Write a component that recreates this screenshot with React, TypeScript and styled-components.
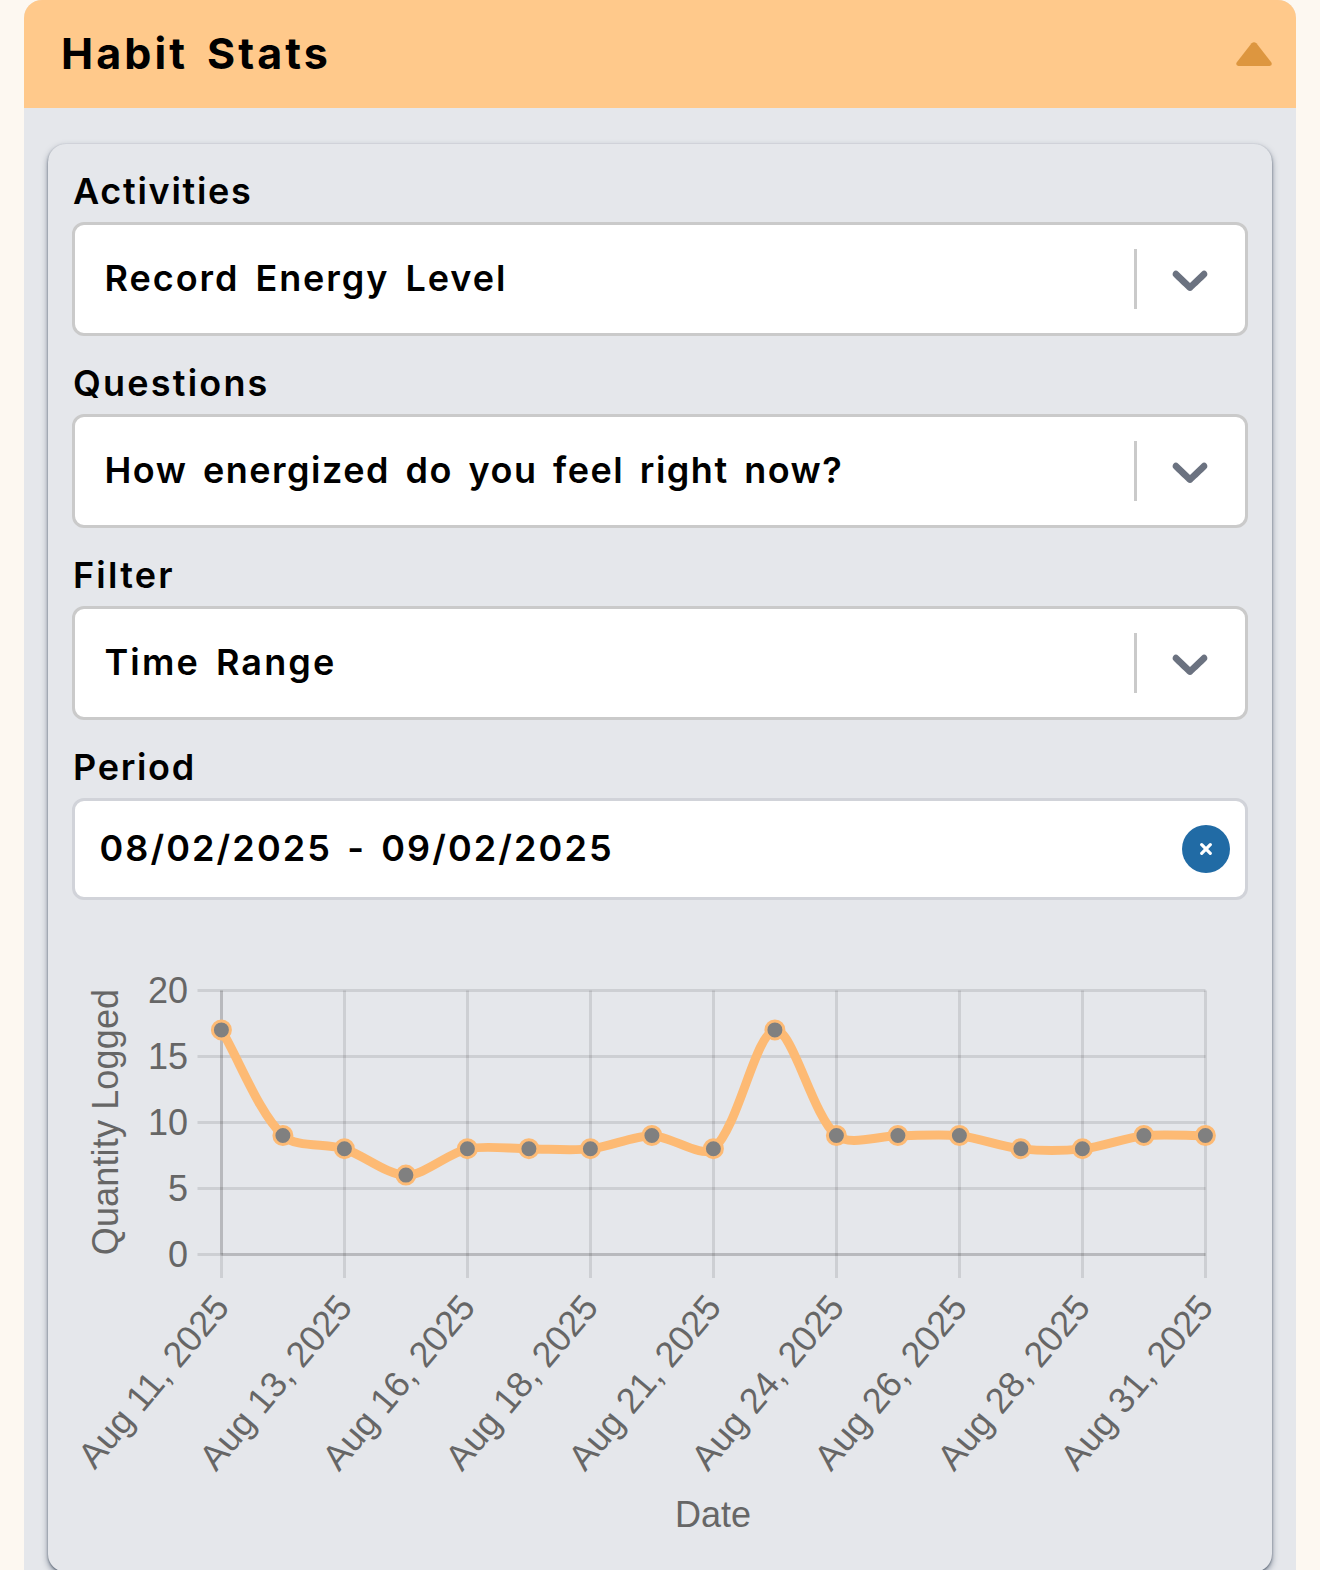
import React from "react";
import styled, { createGlobalStyle } from "styled-components";

const GlobalStyle = createGlobalStyle`
  *, *::before, *::after { box-sizing: border-box; }
  body {
    margin: 0;
    background: #fdf8f1;
    font-family: "Inter", "Liberation Sans", sans-serif;
    color: #000;
  }
`;

const Page = styled.main`
  height: 1570px;
  padding: 0 24px;
  overflow: hidden;
`;

const Panel = styled.section`
  display: flex;
  flex-direction: column;
  min-height: 1600px;
  border-radius: 18px 18px 0 0;
  background: #e5e7eb;
  overflow: hidden;
`;

const PanelHeader = styled.header`
  display: flex;
  align-items: center;
  justify-content: space-between;
  height: 108px;
  padding: 0 24px 0 37px;
  background: #ffc98b;
`;

const Title = styled.h1`
  margin: 0;
  padding-bottom: 2px;
  font-size: 43px;
  font-weight: 700;
  letter-spacing: 3.1px;
  word-spacing: 5.5px;
  white-space: nowrap;
`;

const PanelBody = styled.div`
  padding: 36px 24px;
`;

const Card = styled.div`
  display: flex;
  flex-direction: column;
  height: 1428px;
  padding: 24px;
  border-radius: 18px;
  background: #e5e7eb;
  box-shadow:
    0 3px 6px rgba(71, 85, 105, 0.65),
    0 1px 2px rgba(50, 60, 75, 0.6);
`;

const Form = styled.div`
  display: flex;
  flex-direction: column;
  gap: 24px;
`;

const Field = styled.div`
  display: flex;
  flex-direction: column;
`;

const Label = styled.label<{ $tracking: number }>`
  padding: 1px 0 8px 1px;
  font-size: 36px;
  line-height: 45px;
  font-weight: 560;
  letter-spacing: ${(p) => p.$tracking}px;
`;

const Control = styled.div`
  display: flex;
  align-items: center;
  height: 114px;
  border: 3px solid #cacaca;
  border-radius: 12px;
  background: #fff;
`;

const DateControl = styled(Control)`
  height: 102px;
  padding: 0 15px 0 24.5px;
  border-color: #d1d3d9;
`;

const Value = styled.span<{ $tracking: number; $wordGap?: number }>`
  flex: 1;
  padding-bottom: 2px;
  font-size: 36px;
  font-weight: 560;
  letter-spacing: ${(p) => p.$tracking}px;
  word-spacing: ${(p) => p.$wordGap ?? 5}px;
  white-space: nowrap;
`;

const SelectValue = styled(Value)`
  padding-left: 29.5px;
`;

const Separator = styled.span`
  width: 3px;
  height: 60px;
  background: #cacaca;
`;

const Indicator = styled.span`
  display: flex;
  padding: 0 25px 0 23px;
  color: #6b7280;
`;

const ClearButton = styled.button`
  display: flex;
  align-items: center;
  justify-content: center;
  width: 48px;
  height: 48px;
  padding: 0;
  border: 0;
  border-radius: 50%;
  background: #216ba5;
`;

const ChartArea = styled.div`
  margin: 60px 0 0 -24px;
`;

const Chart = styled.svg`
  display: block;
  font-family: "Liberation Sans", Arial, sans-serif;
  font-size: 36px;
  fill: #666;
`;

const ChevronDown = () => (
  <svg width="60" height="60" viewBox="0 0 20 20" fill="currentColor">
    <path d="M4.516 7.548c0.436-0.446 1.043-0.481 1.576 0l3.908 3.747 3.908-3.747c0.533-0.481 1.141-0.446 1.574 0 0.436 0.445 0.408 1.197 0 1.615-0.406 0.418-4.695 4.502-4.695 4.502-0.217 0.223-0.502 0.335-0.787 0.335s-0.57-0.112-0.789-0.335c0 0-4.287-4.084-4.695-4.502s-0.436-1.17 0-1.615z" />
  </svg>
);

type SelectProps = {
  label: string;
  value: string;
  labelTracking: number;
  valueTracking: number;
};

const SelectField = ({ label, value, labelTracking, valueTracking }: SelectProps) => (
  <Field>
    <Label $tracking={labelTracking}>{label}</Label>
    <Control>
      <SelectValue $tracking={valueTracking}>{value}</SelectValue>
      <Separator />
      <Indicator>
        <ChevronDown />
      </Indicator>
    </Control>
  </Field>
);

type Point = { x: number; y: number };

const VALUES = [17, 9, 8, 6, 8, 8, 8, 9, 8, 17, 9, 9, 9, 8, 8, 9, 9];
const DATES = [
  "Aug 11, 2025",
  "Aug 13, 2025",
  "Aug 16, 2025",
  "Aug 18, 2025",
  "Aug 21, 2025",
  "Aug 24, 2025",
  "Aug 26, 2025",
  "Aug 28, 2025",
  "Aug 31, 2025",
];
const Y_TICKS = [0, 5, 10, 15, 20];

const PLOT = { left: 173.5, right: 1157.5, top: 30.5, bottom: 294.5 };
const TENSION = 0.3;

const stepX = (PLOT.right - PLOT.left) / (VALUES.length - 1);
const toY = (v: number) => PLOT.bottom - (v / 20) * (PLOT.bottom - PLOT.top);
const POINTS: Point[] = VALUES.map((v, i) => ({ x: PLOT.left + i * stepX, y: toY(v) }));

const handles = (i: number) => {
  const cur = POINTS[i];
  const prev = POINTS[i - 1] ?? cur;
  const next = POINTS[i + 1] ?? cur;
  const d1 = Math.hypot(cur.x - prev.x, cur.y - prev.y);
  const d2 = Math.hypot(next.x - cur.x, next.y - cur.y);
  const a = (TENSION * d1) / (d1 + d2);
  const b = (TENSION * d2) / (d1 + d2);
  return {
    before: { x: cur.x - a * (next.x - prev.x), y: cur.y - a * (next.y - prev.y) },
    after: { x: cur.x + b * (next.x - prev.x), y: cur.y + b * (next.y - prev.y) },
  };
};

const linePath = POINTS.reduce((d, p, i) => {
  if (i === 0) return `M${p.x} ${p.y}`;
  const c1 = handles(i - 1).after;
  const c2 = handles(i).before;
  return `${d} C${c1.x} ${c1.y} ${c2.x} ${c2.y} ${p.x} ${p.y}`;
}, "");

const LineChart = () => (
  <Chart width="1224" height="600" viewBox="0 0 1224 600">
    <g stroke="rgba(0,0,0,0.1)" strokeWidth="3">
      {DATES.map((d, i) => {
        const x = PLOT.left + i * stepX * 2;
        return <line key={d} x1={x} x2={x} y1={PLOT.top} y2={318} />;
      })}
      {Y_TICKS.map((t) => (
        <line key={t} x1={149.5} x2={PLOT.right} y1={toY(t)} y2={toY(t)} />
      ))}
      <line x1={PLOT.left} x2={PLOT.left} y1={PLOT.top} y2={PLOT.bottom} />
      <line x1={PLOT.left} x2={PLOT.right} y1={PLOT.bottom} y2={PLOT.bottom} />
    </g>
    <path d={linePath} fill="none" stroke="#fdba74" strokeWidth="9" />
    <g fill="#808080" stroke="#fdba74" strokeWidth="3">
      {POINTS.map((p) => (
        <circle key={p.x} cx={p.x - 0.1} cy={p.y - 0.2} r="9" />
      ))}
    </g>
    {Y_TICKS.map((t) => (
      <text key={t} x="140" y={toY(t) + 12.5} textAnchor="end">
        {t}
      </text>
    ))}
    {DATES.map((d, i) => (
      <text
        key={d}
        transform={`translate(${PLOT.left + i * stepX * 2 + 9.5} 348) rotate(-50)`}
        textAnchor="end"
        letterSpacing="0.05"
      >
        {d}
      </text>
    ))}
    <text
      transform="translate(69.5 162) rotate(-90)"
      textAnchor="middle"
      letterSpacing="0.15"
    >
      Quantity Logged
    </text>
    <text x="665" y="567" textAnchor="middle">
      Date
    </text>
  </Chart>
);

export default function App() {
  return (
    <>
      <GlobalStyle />
      <Page>
        <Panel>
          <PanelHeader>
            <Title>Habit Stats</Title>
            <svg width="36" height="24" viewBox="0 0 36 24">
              <path
                d="M15.6 1.2Q18 -0.8 20.4 1.2L35.4 20.6Q36.6 23.6 33.6 24H2.4Q-0.6 23.6 0.6 20.6Z"
                fill="#dd963f"
              />
            </svg>
          </PanelHeader>
          <PanelBody>
            <Card>
              <Form>
                <SelectField
                  label="Activities"
                  value="Record Energy Level"
                  labelTracking={1.7}
                  valueTracking={1.95}
                />
                <SelectField
                  label="Questions"
                  value="How energized do you feel right now?"
                  labelTracking={2.2}
                  valueTracking={1.5}
                />
                <SelectField
                  label="Filter"
                  value="Time Range"
                  labelTracking={2.2}
                  valueTracking={2.1}
                />
                <Field>
                  <Label $tracking={1.7}>Period</Label>
                  <DateControl>
                    <Value $tracking={2.1} $wordGap={4}>
                      08/02/2025 - 09/02/2025
                    </Value>
                    <ClearButton aria-label="Clear">
                      <svg width="12" height="12" viewBox="0 0 12 12">
                        <path
                          d="M1.7 1.7L10.3 10.3M10.3 1.7L1.7 10.3"
                          stroke="#fff"
                          strokeWidth="3.2"
                          strokeLinecap="round"
                        />
                      </svg>
                    </ClearButton>
                  </DateControl>
                </Field>
              </Form>
              <ChartArea>
                <LineChart />
              </ChartArea>
            </Card>
          </PanelBody>
        </Panel>
      </Page>
    </>
  );
}
